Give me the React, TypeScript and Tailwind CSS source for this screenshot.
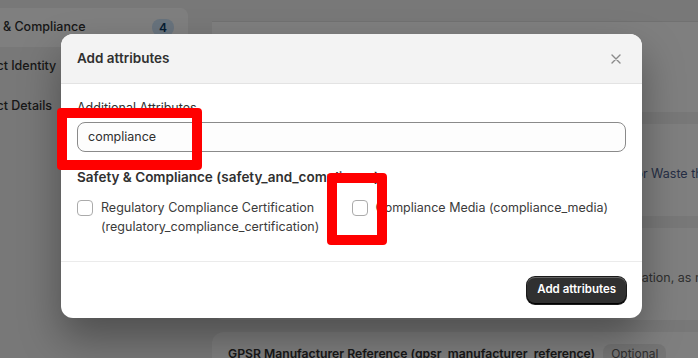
import React from "react";

function Checkbox() {
  return (
    <span className="mt-[2px] block h-4 w-4 shrink-0 rounded-[4px] border border-[#ababab] bg-white" />
  );
}

export default function App() {
  return (
    <div className="relative h-[358px] w-[698px] overflow-hidden bg-[#f1f1f1] font-['Inter','Noto_Sans',sans-serif] text-[12.5px] text-[#303030]">
      {/* Background page */}
      <div className="flex gap-6 pt-2">
        <nav className="ml-[-51px] flex w-[239px] shrink-0 flex-col">
          <div className="flex h-[39px] items-center justify-between rounded-lg bg-white pl-3 pr-[14px] font-medium">
            <span>Safety &amp; Compliance</span>
            <span className="flex h-[17px] w-[22px] items-center justify-center rounded-[8px] bg-[#d0e6fb] text-[12px] font-semibold text-[#0b3a66]">
              4
            </span>
          </div>
          <div className="flex h-[39px] items-center pl-3 font-medium">Product Identity</div>
          <div className="flex h-[40px] items-center pl-3 font-medium">Product Details</div>
        </nav>
        <main className="mt-[13px] flex w-[620px] shrink-0 flex-col gap-3">
          <div className="h-[91px] rounded-b-xl border-t border-[#e3e3e3] bg-white" />
          <div className="h-[92px] rounded-xl bg-white px-4 pt-3">
            <div className="font-semibold leading-5">WEEE Compliance (weee_compliance)</div>
            <div className="mt-2 whitespace-nowrap leading-5 text-[#4b5d8a]">
              Specifies whether this product is covered by the European directive for Waste thresholds and disposal rules
            </div>
          </div>
          <div className="h-[92px] rounded-xl bg-white px-4 pt-3">
            <div className="font-semibold leading-5">Certification Reference (certification_reference)</div>
            <div className="mt-2 whitespace-nowrap leading-5 text-[#616161]">
              Reference to a certificate or declaration of conformity for this classification, as required by law
            </div>
          </div>
          <div className="h-[92px] rounded-xl bg-white px-4 pt-3">
            <div className="flex items-center gap-2">
              <span className="text-[12.2px] font-semibold leading-5">GPSR Manufacturer Reference (gpsr_manufacturer_reference)</span>
              <span className="rounded-lg bg-[#ebebeb] px-2 text-[12px] leading-5 text-[#616161]">Optional</span>
            </div>
          </div>
        </main>
      </div>

      {/* Backdrop */}
      <div className="absolute inset-0 bg-black/50" />

      {/* Modal */}
      <div className="absolute left-[61px] top-[34px] w-[581px] overflow-hidden rounded-xl bg-white shadow-[0_20px_40px_rgba(0,0,0,0.35)]">
        <div className="flex h-[50px] items-center justify-between border-b border-[#e3e3e3] bg-[#f3f3f3] px-4">
          <h2 className="text-[13.5px] font-semibold text-[#303030]">Add attributes</h2>
          <button className="flex h-5 w-5 items-center justify-center text-[#8a8a8a]">
            <svg width="12" height="12" viewBox="0 0 12 12" fill="none" stroke="currentColor" strokeWidth="1.4" strokeLinecap="round">
              <path d="M2 2L10 10M10 2L2 10" />
            </svg>
          </button>
        </div>
        <div className="px-4 pb-[25px] pt-[14px]">
          <label className="block leading-5">Additional Attributes</label>
          <div className="mt-1 flex h-[30px] items-center rounded-lg border border-[#8a8a8a] bg-[#fdfdfd] px-[10px]">
            compliance
          </div>
          <h3 className="mt-[15px] text-[13.5px] font-semibold leading-5">
            Safety &amp; Compliance (safety_and_compliance)
          </h3>
          <div className="mt-[11px] grid grid-cols-2">
            <div className="flex gap-2 pr-4">
              <Checkbox />
              <span className="leading-[19px] text-[#3b3b3b]">
                Regulatory Compliance Certification (regulatory_compliance_certification)
              </span>
            </div>
            <div className="flex gap-2">
              <Checkbox />
              <span className="leading-[19px] text-[#3b3b3b]">Compliance Media (compliance_media)</span>
            </div>
          </div>
        </div>
        <div className="flex h-[57px] items-center justify-end border-t border-[#ebebeb] px-4">
          <button className="h-[27px] rounded-lg bg-[#303030] px-[10px] text-[11.5px] font-semibold text-white shadow-[inset_0_-1px_0_#000,inset_0_1px_0_rgba(255,255,255,0.25),0_0_0_1px_#1a1a1a]">
            Add attributes
          </button>
        </div>
      </div>

      {/* Annotation boxes */}
      <div className="absolute left-[57px] top-[108px] h-[62px] w-[145px] rounded-[4px] border-[10px] border-[#ff0000]" />
      <div className="absolute left-[327px] top-[173px] h-[72px] w-[60px] rounded-[4px] border-[10px] border-[#ff0000]" />
    </div>
  );
}
